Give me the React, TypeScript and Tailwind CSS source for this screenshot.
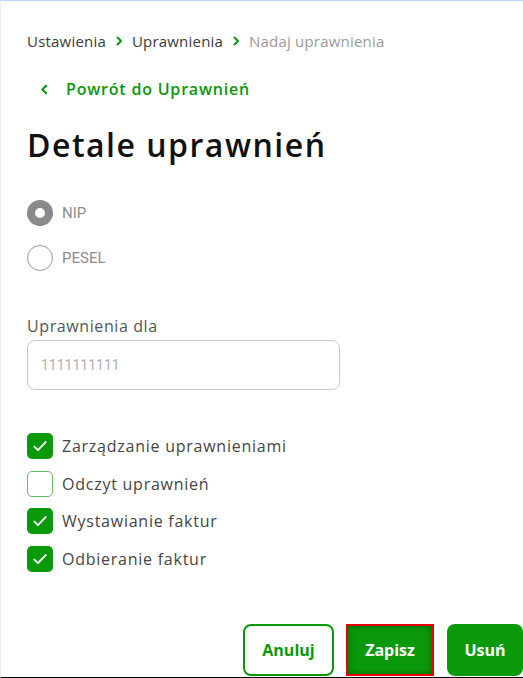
import React from "react";

const G = "#0a990a";

function Check() {
  return (
    <svg width="18" height="18" viewBox="0 0 16 16" fill="none">
      <path d="M3 8.5l3.2 3.2L13 4.5" stroke="white" strokeWidth="1.7" strokeLinecap="round" strokeLinejoin="round" />
    </svg>
  );
}

function Chevron({ dir = "right", size = 10 }: { dir?: "right" | "left"; size?: number }) {
  return (
    <svg width={size} height={size} viewBox="0 0 10 10" fill="none">
      {dir === "right" ? (
        <path d="M3.5 1.5L7 5 3.5 8.5" stroke={G} strokeWidth="2" strokeLinecap="round" strokeLinejoin="round" />
      ) : (
        <path d="M6.5 1.5L3 5l3.5 3.5" stroke={G} strokeWidth="1.9" strokeLinecap="round" strokeLinejoin="round" />
      )}
    </svg>
  );
}

export default function App() {
  const items = [
    { label: "Zarządzanie uprawnieniami", checked: true },
    { label: "Odczyt uprawnień", checked: false },
    { label: "Wystawianie faktur", checked: true },
    { label: "Odbieranie faktur", checked: true },
  ];
  return (
    <div
      className="w-[523px] h-[678px] bg-white border-t border-t-[#b7d8fb] border-l border-l-[#efefef] border-b border-b-black flex flex-col overflow-hidden"
      style={{ fontFamily: "'Open Sans', 'Noto Sans', sans-serif" }}
    >
      <div className="pl-[26px] pt-[30px] flex items-center gap-[8px] text-[15px] leading-[20px] tracking-[0.2px]">
        <span className="text-[#3a3a3a]">Ustawienia</span>
        <Chevron />
        <span className="text-[#3a3a3a]">Uprawnienia</span>
        <Chevron />
        <span className="text-[#9a9a9a]">Nadaj uprawnienia</span>
      </div>

      <div className="pl-[38px] mt-[28px] flex items-center gap-[16px] text-[16px] leading-[20px] font-semibold tracking-[0.8px] text-[#0a990a]">
        <Chevron dir="left" size={11} />
        <span>Powrót do Uprawnień</span>
      </div>

      <h1 className="pl-[26px] mt-[26px] text-[32px] leading-[40px] font-semibold tracking-[1.5px] text-[#111]">Detale uprawnień</h1>

      <div className="pl-[26px] mt-[35px] flex flex-col gap-[19px]" style={{ fontFamily: "Roboto, sans-serif" }}>
        <div className="flex items-center gap-[9px]">
          <div className="w-[26px] h-[26px] rounded-full border-[8px] border-[#8a8a8a] bg-white" />
          <span className="text-[15px] text-[#8c8c8c]">NIP</span>
        </div>
        <div className="flex items-center gap-[9px]">
          <div className="w-[26px] h-[26px] rounded-full border-[1.5px] border-[#9a9a9a] bg-white" />
          <span className="text-[15px] text-[#8c8c8c]">PESEL</span>
        </div>
      </div>

      <div className="pl-[26px] mt-[45px] text-[16px] leading-[20px] tracking-[0.6px] text-[#555]">Uprawnienia dla</div>
      <div className="ml-[26px] mt-[4px] w-[313px] h-[50px] rounded-[8px] border border-[#c8c8c8] flex items-center pl-[13px]">
        <span className="text-[14px] text-[#b0b0b0]" style={{ fontFamily: "Roboto, sans-serif" }}>1111111111</span>
      </div>

      <div className="pl-[26px] mt-[43px] flex flex-col gap-[11.5px]">
        {items.map((it) => (
          <div key={it.label} className="flex items-center gap-[9px]">
            {it.checked ? (
              <div className="w-[26px] h-[26px] rounded-[5px] bg-[#0a990a] flex items-center justify-center">
                <Check />
              </div>
            ) : (
              <div className="w-[26px] h-[26px] rounded-[5px] border-[1.5px] border-[#62bd62] bg-white" />
            )}
            <span className="text-[16px] tracking-[0.75px] text-[#454545]">{it.label}</span>
          </div>
        ))}
      </div>

      <div className="flex-1" />
      <div className="flex justify-end pb-[1px]">
        <button className="w-[91px] h-[52px] rounded-[8px] border-2 border-[#0a990a] bg-white text-[#0a990a] font-bold text-[16px]">
          Anuluj
        </button>
        <button className="ml-[12px] w-[88px] h-[52px] border-2 border-[#e8000b] bg-[#0a990a] text-white font-bold text-[16px] shadow-[inset_0_0_6px_rgba(0,60,0,0.6)]">
          Zapisz
        </button>
        <button className="ml-[13px] w-[76px] h-[52px] rounded-[8px] bg-[#0a990a] text-white font-bold text-[16px]">
          Usuń
        </button>
      </div>
    </div>
  );
}
